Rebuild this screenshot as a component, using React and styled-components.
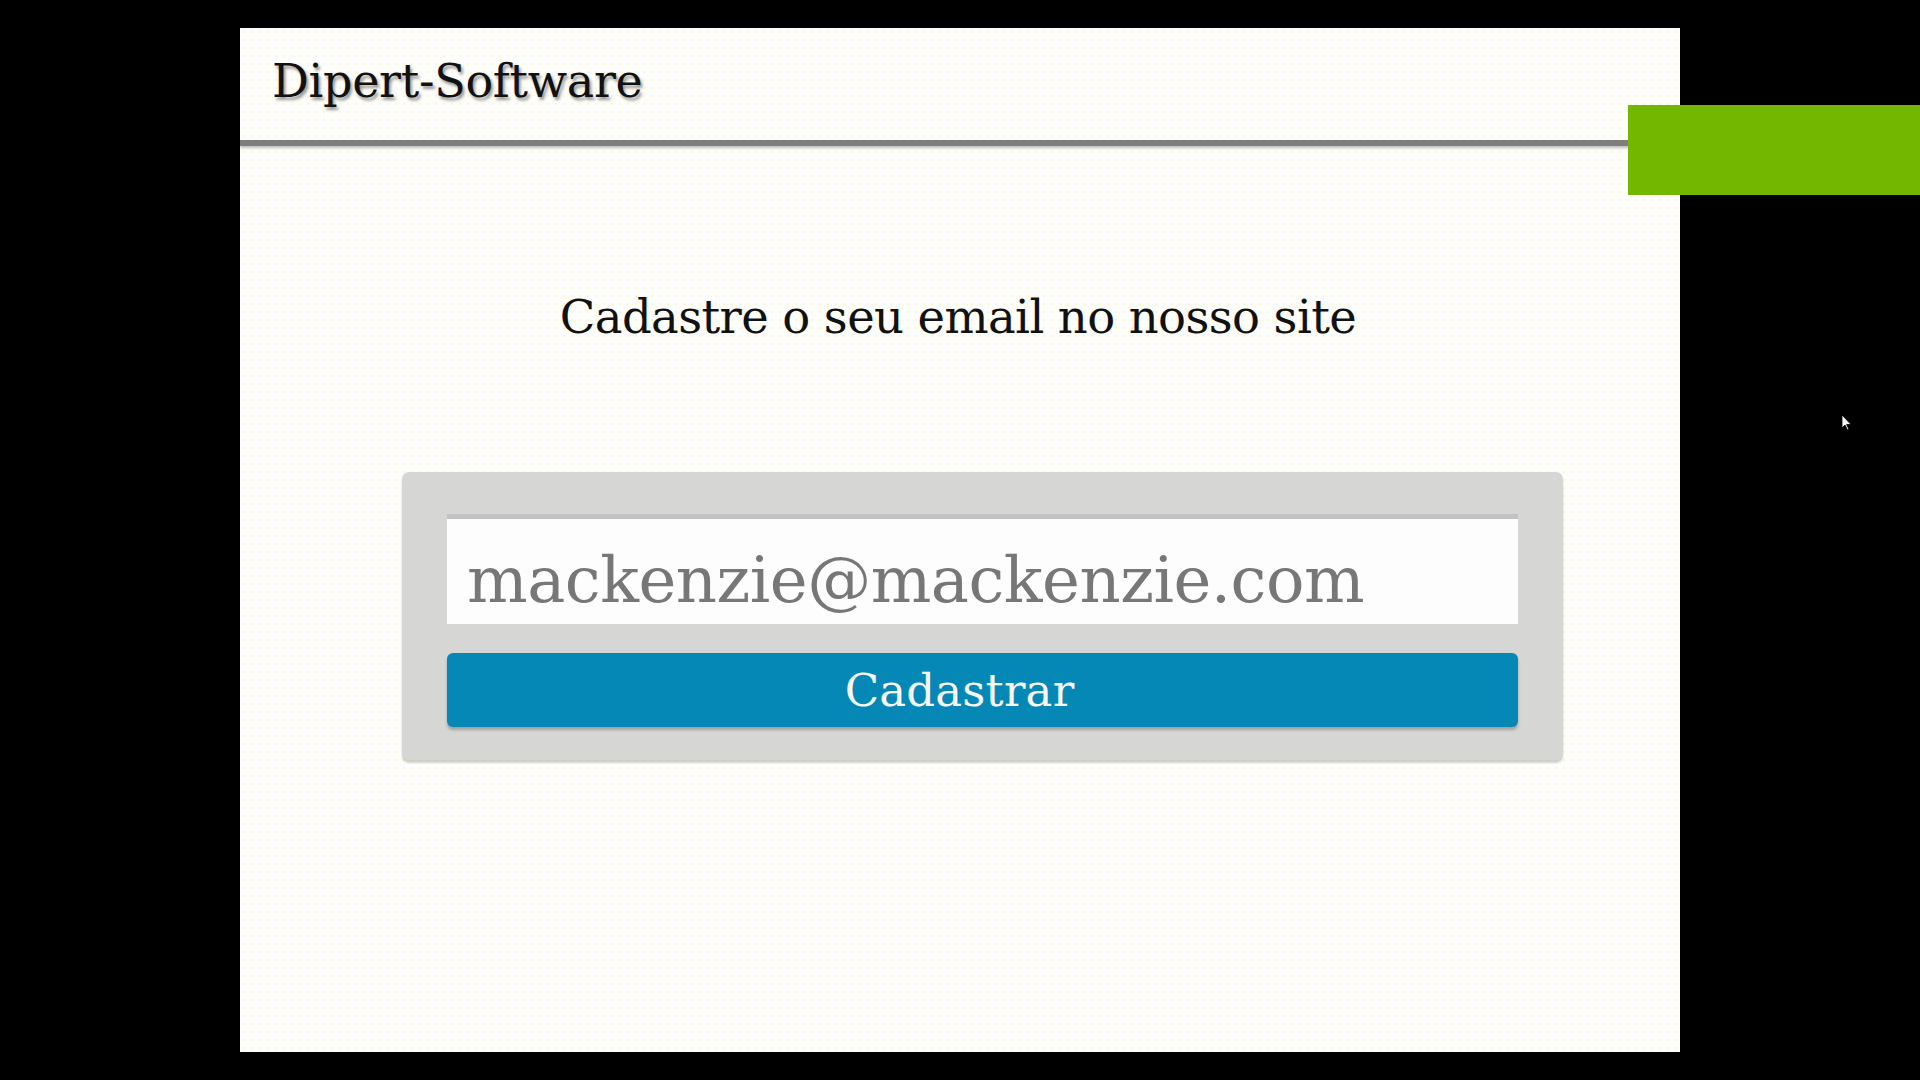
import React from "react";
import styled, { createGlobalStyle } from "styled-components";

const Global = createGlobalStyle`
  html, body { margin: 0; padding: 0; background: #000; }
  body { font-family: "DejaVu Serif", serif; }
  * { box-sizing: border-box; }
`;

const Screen = styled.div`
  position: relative;
  width: 1920px;
  height: 1080px;
  background: #000;
  padding: 28px 0 0 240px;
  overflow: hidden;
`;

const Slide = styled.section`
  width: 1440px;
  height: 1024px;
  background-color: #fdfdfb;
  background-image: radial-gradient(rgba(250, 235, 120, 0.35) 0.8px, transparent 1px);
  background-size: 8px 8px;
  display: flex;
  flex-direction: column;
`;

const Header = styled.header`
  height: 112px;
  padding: 23px 0 0 32px;
  display: flex;
  align-items: flex-start;
`;

const Brand = styled.h1`
  margin: 0;
  font-family: "DejaVu Serif", serif;
  font-weight: normal;
  font-size: 46px;
  letter-spacing: -0.3px;
  line-height: 60px;
  color: #111;
  text-shadow: 2px 3px 3px rgba(0, 0, 0, 0.4);
`;

const Rule = styled.div`
  height: 6px;
  background: #7e7e7e;
  box-shadow: 0 2px 3px rgba(0, 0, 0, 0.25);
`;

const Main = styled.main`
  display: flex;
  flex-direction: column;
  padding-top: 141px;
`;

const Heading = styled.h2`
  margin: 0;
  padding-right: 4px;
  text-align: center;
  font-family: "DejaVu Serif", serif;
  font-weight: normal;
  font-size: 46.5px;
  letter-spacing: -0.6px;
  line-height: 60px;
  color: #111;
`;

const FormBox = styled.form`
  margin: 125px 0 0 162px;
  width: 1161px;
  padding: 42px 45px 33px;
  background: #d6d6d5;
  border-radius: 7px;
  box-shadow: 0 3px 2px rgba(0, 0, 0, 0.18);
  display: flex;
  flex-direction: column;
  gap: 29px;
`;

const EmailInput = styled.input`
  height: 110px;
  width: 100%;
  border: none;
  outline: none;
  background: #fdfdfd;
  box-shadow: inset 0 5px 0 #c3c3c3;
  padding: 21px 0 0 20px;
  font-family: "DejaVu Serif", serif;
  font-size: 64px;
  letter-spacing: -0.5px;
  color: #777;
  &::placeholder { color: #777; opacity: 1; }
`;

const Submit = styled.button`
  height: 74px;
  width: 100%;
  border: none;
  border-radius: 6px;
  background: #0588b6;
  box-shadow: 0 3px 3px rgba(0, 0, 0, 0.25);
  color: #f7f7f7;
  font-family: "DejaVu Serif", serif;
  font-size: 45px;
  letter-spacing: 0.2px;
  padding: 1px 46px 0 0;
  cursor: pointer;
`;

const GreenTab = styled.div`
  position: absolute;
  left: 1628px;
  top: 105px;
  width: 292px;
  height: 90px;
  background: #73b700;
`;

const Pointer = styled.svg`
  position: absolute;
  left: 1841px;
  top: 414px;
`;

export default function App() {
  return (
    <>
      <Global />
      <Screen>
        <Slide>
          <Header>
            <Brand>Dipert-Software</Brand>
          </Header>
          <Rule />
          <Main>
            <Heading>Cadastre o seu email no nosso site</Heading>
            <FormBox onSubmit={(e) => e.preventDefault()}>
              <EmailInput type="email" placeholder="mackenzie@mackenzie.com" />
              <Submit type="submit">Cadastrar</Submit>
            </FormBox>
          </Main>
        </Slide>
        <GreenTab />
        <Pointer width="12" height="18" viewBox="0 0 12 18">
          <path d="M1 1 L1 14 L4 11 L6.5 16 L8 15.3 L5.6 10.5 L10 10.5 Z" fill="#fff" stroke="#000" strokeWidth="0.8" />
        </Pointer>
      </Screen>
    </>
  );
}
